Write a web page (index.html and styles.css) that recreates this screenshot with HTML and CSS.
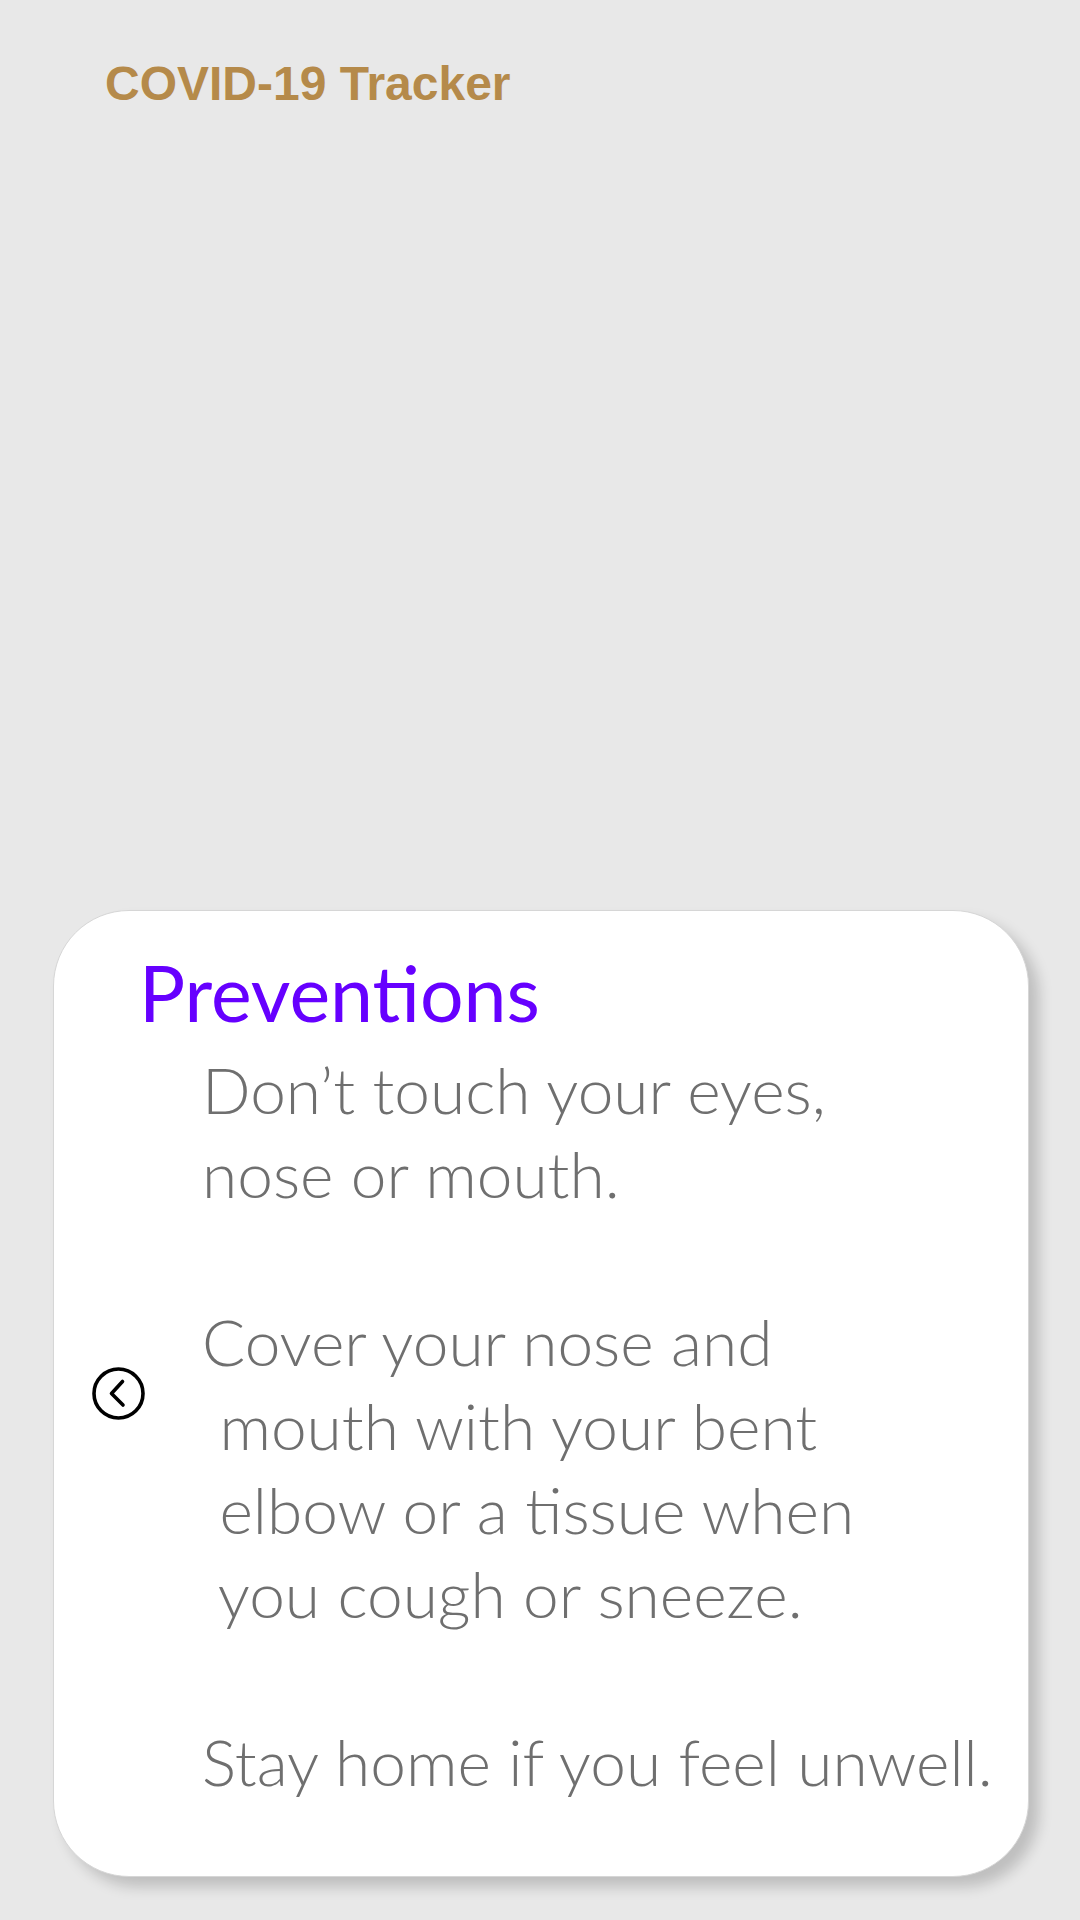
FILE: index.html
```html
<!DOCTYPE html>
<html lang="en">
<head>
<meta charset="utf-8">
<title>COVID-19 Tracker</title>
<link rel="stylesheet" href="styles.css">
</head>
<body>
<header class="app-header">
  <h1 class="app-title">COVID-19 Tracker</h1>
</header>
<main class="content">
  <section class="card">
    <button class="back-btn" aria-label="Back">
      <svg viewBox="0 0 53 53" width="53" height="53">
        <circle cx="26.5" cy="26.5" r="24.5" fill="none" stroke="#000" stroke-width="3.6"/>
        <polyline points="30.5,14.5 19.5,26.5 31,38" fill="none" stroke="#000" stroke-width="3.6" stroke-linecap="round" stroke-linejoin="round"/>
      </svg>
    </button>
    <h2 class="card-title">Preventions</h2>
    <p class="card-text">Don’t touch your eyes,
nose or mouth.

Cover your nose and
 mouth with your bent
 elbow or a tissue when
 you cough or sneeze.

Stay home if you feel unwell.</p>
  </section>
</main>
</body>
</html>
```
FILE: styles.css
```css
html, body {
  margin: 0;
  padding: 0;
}
body {
  width: 1080px;
  height: 1920px;
  background: #e8e8e8;
  overflow: hidden;
}
.app-header {
  padding: 60px 0 0 105px;
}
.app-title {
  margin: 0;
  font-family: "Liberation Sans", Arial, sans-serif;
  font-weight: 700;
  font-size: 48px;
  line-height: 48px;
  color: #b58a4a;
}
.content {
  padding: 802px 0 0 53px;
}
.card {
  box-sizing: border-box;
  width: 976px;
  height: 967px;
  background: #fff;
  border: 1px solid #d6d6d6;
  border-radius: 76px;
  box-shadow: 10px 10px 14px rgba(0, 0, 0, 0.18);
  padding: 44px 0 44px 38px;
  display: grid;
  grid-template-columns: 49px 1fr;
  grid-template-rows: auto 1fr;
}
.back-btn {
  grid-column: 1;
  grid-row: 1 / 3;
  align-self: center;
  justify-self: start;
  width: 53px;
  height: 53px;
  padding: 0;
  margin: 0;
  border: 0;
  background: none;
  display: block;
}
.back-btn svg {
  display: block;
}
.card-title {
  grid-column: 2;
  grid-row: 1;
  margin: 0 0 0 -2px;
  font-family: Lato, "Open Sans", sans-serif;
  font-weight: 400;
  font-size: 77px;
  line-height: 74px;
  color: #6600ff;
}
.card-text {
  grid-column: 2;
  grid-row: 2;
  margin: 19px 0 0 61px;
  white-space: pre;
  font-family: Lato, "Open Sans", sans-serif;
  font-weight: 300;
  font-size: 64px;
  line-height: 84px;
  color: #6f6f6f;
}
```
